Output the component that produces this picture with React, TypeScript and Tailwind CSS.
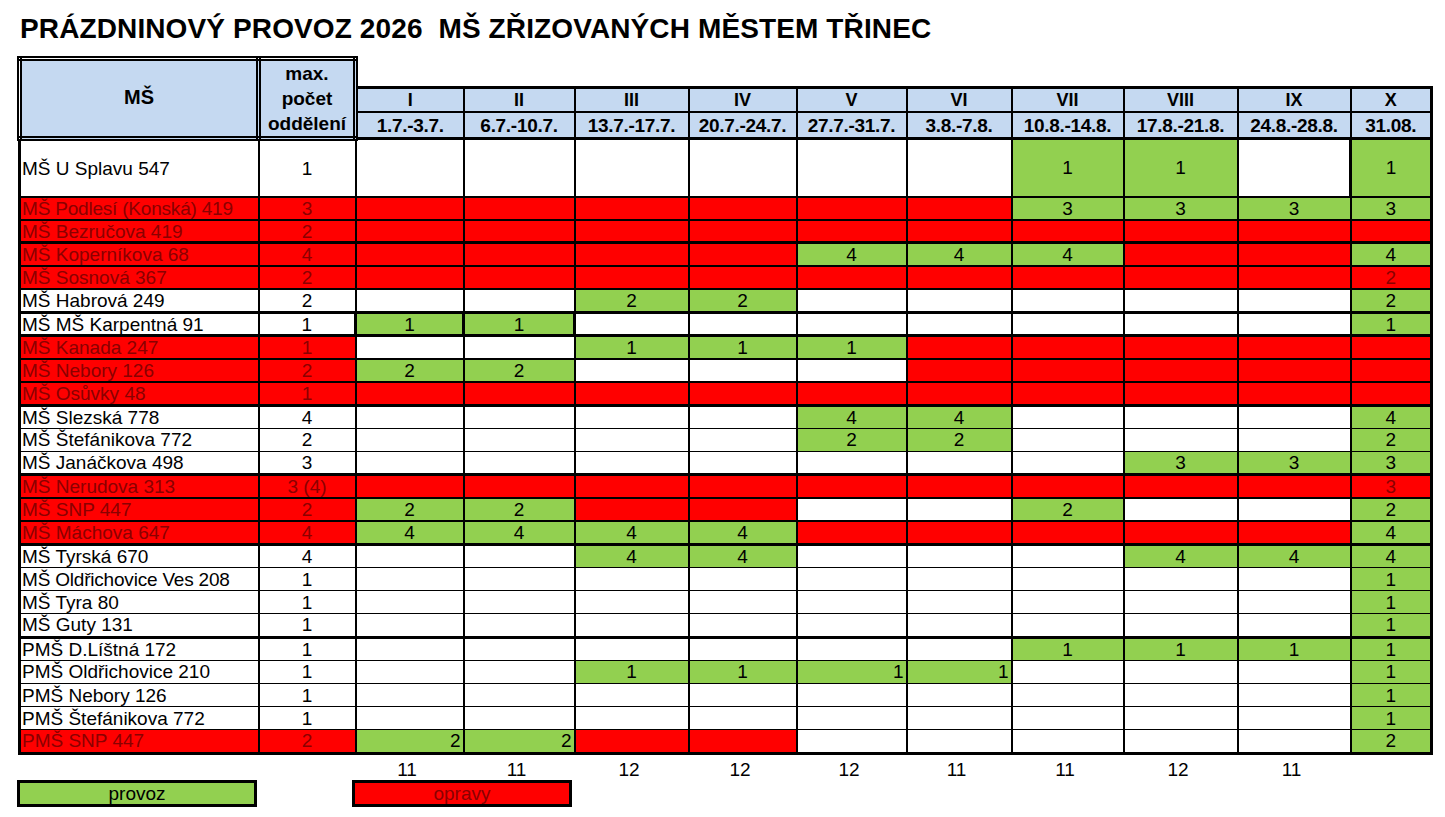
import React from 'react';

type Row = {
  name: string;
  max: string;
  red?: boolean;
  tall?: boolean;
  top: 1 | 2 | 3;
  cells: string[];
};

const R = 'R';
const W = '';

const periods = [
  { n: 'I', d: '1.7.-3.7.' },
  { n: 'II', d: '6.7.-10.7.' },
  { n: 'III', d: '13.7.-17.7.' },
  { n: 'IV', d: '20.7.-24.7.' },
  { n: 'V', d: '27.7.-31.7.' },
  { n: 'VI', d: '3.8.-7.8.' },
  { n: 'VII', d: '10.8.-14.8.' },
  { n: 'VIII', d: '17.8.-21.8.' },
  { n: 'IX', d: '24.8.-28.8.' },
  { n: 'X', d: '31.08.' },
];

const onlyX = (v: string) => [W, W, W, W, W, W, W, W, W, v];

// '' white, 'R' red, 'g1' green with value, 'r2' red with value, trailing '>' = right aligned, '|' = thick sides
const rows: Row[] = [
  { name: 'MŠ U Splavu 547', max: '1', tall: true, top: 3, cells: [W, W, W, W, W, W, 'g1', 'g1', W, 'g1|'] },
  { name: 'MŠ Podlesí (Konská) 419', max: '3', red: true, top: 2, cells: [R, R, R, R, R, R, 'g3', 'g3', 'g3', 'g3'] },
  { name: 'MŠ Bezručova 419', max: '2', red: true, top: 2, cells: [R, R, R, R, R, R, R, R, R, R] },
  { name: 'MŠ Koperníkova 68', max: '4', red: true, top: 3, cells: [R, R, R, R, 'g4', 'g4', 'g4', R, R, 'g4'] },
  { name: 'MŠ Sosnová 367', max: '2', red: true, top: 2, cells: [R, R, R, R, R, R, R, R, R, 'r2'] },
  { name: 'MŠ Habrová 249', max: '2', top: 2, cells: [W, W, 'g2', 'g2', W, W, W, W, W, 'g2'] },
  { name: 'MŠ MŠ Karpentná 91', max: '1', top: 3, cells: ['g1|', 'g1|', W, W, W, W, W, W, W, 'g1'] },
  { name: 'MŠ Kanada 247', max: '1', red: true, top: 3, cells: [W, W, 'g1', 'g1', 'g1', R, R, R, R, R] },
  { name: 'MŠ Nebory 126', max: '2', red: true, top: 2, cells: ['g2', 'g2', W, W, W, R, R, R, R, R] },
  { name: 'MŠ Osůvky 48', max: '1', red: true, top: 2, cells: [R, R, R, R, R, R, R, R, R, R] },
  { name: 'MŠ Slezská 778', max: '4', top: 3, cells: [W, W, W, W, 'g4', 'g4', W, W, W, 'g4'] },
  { name: 'MŠ Štefánikova 772', max: '2', top: 1, cells: [W, W, W, W, 'g2', 'g2', W, W, W, 'g2'] },
  { name: 'MŠ Janáčkova 498', max: '3', top: 1, cells: [W, W, W, W, W, W, W, 'g3', 'g3', 'g3'] },
  { name: 'MŠ Nerudova 313', max: '3 (4)', red: true, top: 3, cells: [R, R, R, R, R, R, R, R, R, 'r3'] },
  { name: 'MŠ SNP 447', max: '2', red: true, top: 2, cells: ['g2', 'g2', R, R, W, W, 'g2', W, W, 'g2'] },
  { name: 'MŠ Máchova 647', max: '4', red: true, top: 2, cells: ['g4', 'g4', 'g4', 'g4', R, R, R, R, R, 'g4'] },
  { name: 'MŠ Tyrská 670', max: '4', top: 3, cells: [W, W, 'g4', 'g4', W, W, W, 'g4', 'g4', 'g4'] },
  { name: 'MŠ Oldřichovice Ves 208', max: '1', top: 1, cells: onlyX('g1') },
  { name: 'MŠ Tyra 80', max: '1', top: 1, cells: onlyX('g1') },
  { name: 'MŠ Guty 131', max: '1', top: 1, cells: onlyX('g1') },
  { name: 'PMŠ D.Líštná 172', max: '1', top: 3, cells: [W, W, W, W, W, W, 'g1', 'g1', 'g1', 'g1'] },
  { name: 'PMŠ Oldřichovice 210', max: '1', top: 1, cells: [W, W, 'g1', 'g1', 'g1>', 'g1>', W, W, W, 'g1'] },
  { name: 'PMŠ Nebory 126', max: '1', top: 1, cells: onlyX('g1') },
  { name: 'PMŠ Štefánikova 772', max: '1', top: 1, cells: onlyX('g1') },
  { name: 'PMŠ SNP 447', max: '2', red: true, top: 1, cells: ['g2>', 'g2>', R, R, W, W, W, W, W, 'g2'] },
];

const totals = ['11', '11', '12', '12', '12', '11', '11', '12', '11'];

const topBorder = {
  1: 'border-t border-t-black',
  2: 'border-t-2 border-t-black',
  3: 'border-t-[3px] border-t-black',
};

const edgeFor = (index: number, thick: boolean) => {
  if (thick) return index === 9 ? 'border-l-[3px] border-r-[3px]' : 'border-x-[3px]';
  if (index === 9) return 'border-l-2 border-r-[3px]';
  return 'border-l-2';
};

function PeriodCell({ code, index }: { code: string; index: number }) {
  const thick = code.includes('|');
  const edge = edgeFor(index, thick);
  if (code === W) {
    return <td className={`${edge} border-black bg-white`} />;
  }
  if (code === R) {
    return <td className={`${edge} border-black bg-[#ff0000]`} />;
  }
  const red = code[0] === 'r';
  const right = code.includes('>');
  const value = code.slice(1).replace('>', '').replace('|', '');
  return (
    <td
      className={`${edge} border-black px-[2px] ${right ? 'text-right' : 'text-center'} ${
        red ? 'bg-[#ff0000] text-[#8a0000]' : 'bg-[#92d050] text-black'
      }`}
    >
      {value}
    </td>
  );
}

export default function App() {
  return (
    <div className="min-h-[817px] w-[1445px] bg-white font-['Liberation_Sans',Arial,sans-serif] text-black">
      <div className="pl-[20px] pt-[14px] text-[28px] font-bold leading-[30px] tracking-[0.12px] whitespace-pre">
        PRÁZDNINOVÝ PROVOZ 2026  MŠ ZŘIZOVANÝCH MĚSTEM TŘINEC
      </div>

      <div className="pl-[17px] pt-[12px]">
        <table className="table-fixed border-collapse text-[19px] leading-none">
          <colgroup>
            <col className="w-[239px]" />
            <col className="w-[97px]" />
            <col className="w-[108px]" />
            <col className="w-[111px]" />
            <col className="w-[114px]" />
            <col className="w-[108px]" />
            <col className="w-[110px]" />
            <col className="w-[105px]" />
            <col className="w-[112px]" />
            <col className="w-[114px]" />
            <col className="w-[113px]" />
            <col className="w-[81px]" />
          </colgroup>
          <thead>
            <tr className="h-[28px]">
              <th
                rowSpan={3}
                className="border-[5px] border-double border-black bg-[#c5d9f1] pb-[4px] text-[20px] font-bold"
              >
                MŠ
              </th>
              <th
                rowSpan={3}
                className="border-[5px] border-double border-black bg-[#c5d9f1] text-[19px] font-bold leading-[25px]"
              >
                max.
                <br />
                počet
                <br />
                oddělení
              </th>
              <th colSpan={10} className="border-0" />
            </tr>
            <tr className="h-[23px]">
              {periods.map((p, i) => (
                <th
                  key={p.n}
                  className={`border-t-[3px] border-b-2 ${
                    i === 9 ? 'border-l-2 border-r-[3px]' : 'border-l-2'
                  } border-black bg-[#c5d9f1] text-[18px] font-bold`}
                >
                  {p.n}
                </th>
              ))}
            </tr>
            <tr className="h-[25px]">
              {periods.map((p, i) => (
                <th
                  key={p.d}
                  className={`${
                    i === 9 ? 'border-l-2 border-r-[3px]' : 'border-l-2'
                  } border-black bg-[#c5d9f1] text-[19px] font-bold tracking-[-0.3px]`}
                >
                  {p.d}
                </th>
              ))}
            </tr>
          </thead>
          <tbody>
            {rows.map((row, ri) => (
              <tr
                key={row.name}
                className={`${row.tall ? 'h-[58px]' : 'h-[23.2px]'} ${topBorder[row.top]} ${
                  ri === rows.length - 1 ? 'border-b-[3px] border-b-black' : ''
                }`}
              >
                <td
                  className={`border-l-[3px] border-r-2 border-black pl-[1px] text-left whitespace-nowrap ${
                    row.red ? 'bg-[#ff0000] text-[#8a0000]' : 'bg-white'
                  } ${row.name.length > 20 ? 'tracking-[-0.2px]' : ''}`}
                >
                  {row.name}
                </td>
                <td
                  className={`border-r-2 border-black text-center ${
                    row.red ? 'bg-[#ff0000] text-[#8a0000]' : 'bg-white'
                  }`}
                >
                  {row.max}
                </td>
                {row.cells.map((c, i) => (
                  <PeriodCell key={i} code={c} index={i} />
                ))}
              </tr>
            ))}
          </tbody>
        </table>

        <div className="grid grid-cols-[239px_97px_108px_111px_114px_108px_110px_105px_112px_114px_113px_81px] pt-[5px] text-[19px] leading-[20px]">
          <div />
          <div />
          {totals.map((t, i) => (
            <div key={i} className="text-center">
              {t}
            </div>
          ))}
        </div>

        <div className="flex items-start text-[19px]">
          <div className="flex h-[27px] w-[240px] items-center justify-center border-[3px] border-black bg-[#92d050] leading-none">
            provoz
          </div>
          <div className="ml-[95px] flex h-[27px] w-[220px] items-center justify-center border-[3px] border-black bg-[#ff0000] leading-none text-[#8a0000]">
            opravy
          </div>
        </div>
      </div>
    </div>
  );
}
